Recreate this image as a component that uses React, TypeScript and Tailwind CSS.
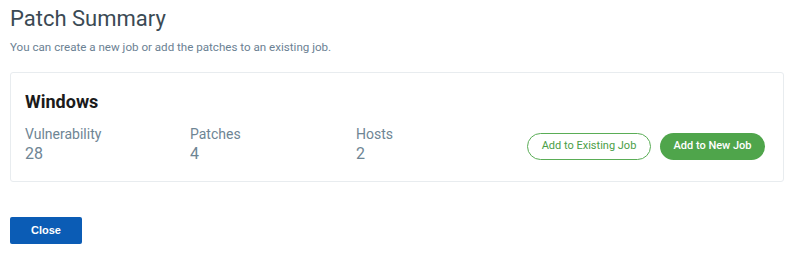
export default function App() {
  return (
    <div className="w-[798px] h-[258px] bg-white px-[10px] pt-[5px]" style={{ fontFamily: 'Roboto, "Liberation Sans", sans-serif' }}>
      <h1 className="text-[22px] leading-[28px] text-[#3b4a54] font-normal">Patch Summary</h1>
      <p className="mt-[6px] text-[11.6px] leading-[16px] text-[#6b8193]">You can create a new job or add the patches to an existing job.</p>
      <div className="mt-[17px] w-[774px] h-[110px] border border-[#e8ecef] rounded-[3px] pl-[14px] pr-[18px] pt-[17px]">
        <h2 className="text-[18px] leading-[24px] font-bold text-[#1b1b1b]">Windows</h2>
        <div className="mt-[12px] flex items-center">
          <div className="w-[165px]">
            <div className="text-[14px] leading-[16px] text-[#6e8594]">Vulnerability</div>
            <div className="mt-[2px] text-[16px] leading-[20px] text-[#6e8594]">28</div>
          </div>
          <div className="w-[166px]">
            <div className="text-[14px] leading-[16px] text-[#6e8594]">Patches</div>
            <div className="mt-[2px] text-[16px] leading-[20px] text-[#6e8594]">4</div>
          </div>
          <div className="w-[100px]">
            <div className="text-[14px] leading-[16px] text-[#6e8594]">Hosts</div>
            <div className="mt-[2px] text-[16px] leading-[20px] text-[#6e8594]">2</div>
          </div>
          <div className="ml-auto flex gap-[9px] mt-[2px]">
            <button className="h-[27px] w-[124px] rounded-full border border-[#5aad56] text-[#4a9e46] text-[11px] bg-white">Add to Existing Job</button>
            <button className="h-[27px] w-[105px] rounded-full bg-[#4fa54b] text-white text-[11px] font-medium">Add to New Job</button>
          </div>
        </div>
      </div>
      <button className="mt-[35px] h-[27px] w-[72px] rounded-[2px] bg-[#0b5cb5] text-white text-[11px] font-bold" style={{ fontFamily: '"Liberation Sans", Arial, sans-serif' }}>Close</button>
    </div>
  );
}
